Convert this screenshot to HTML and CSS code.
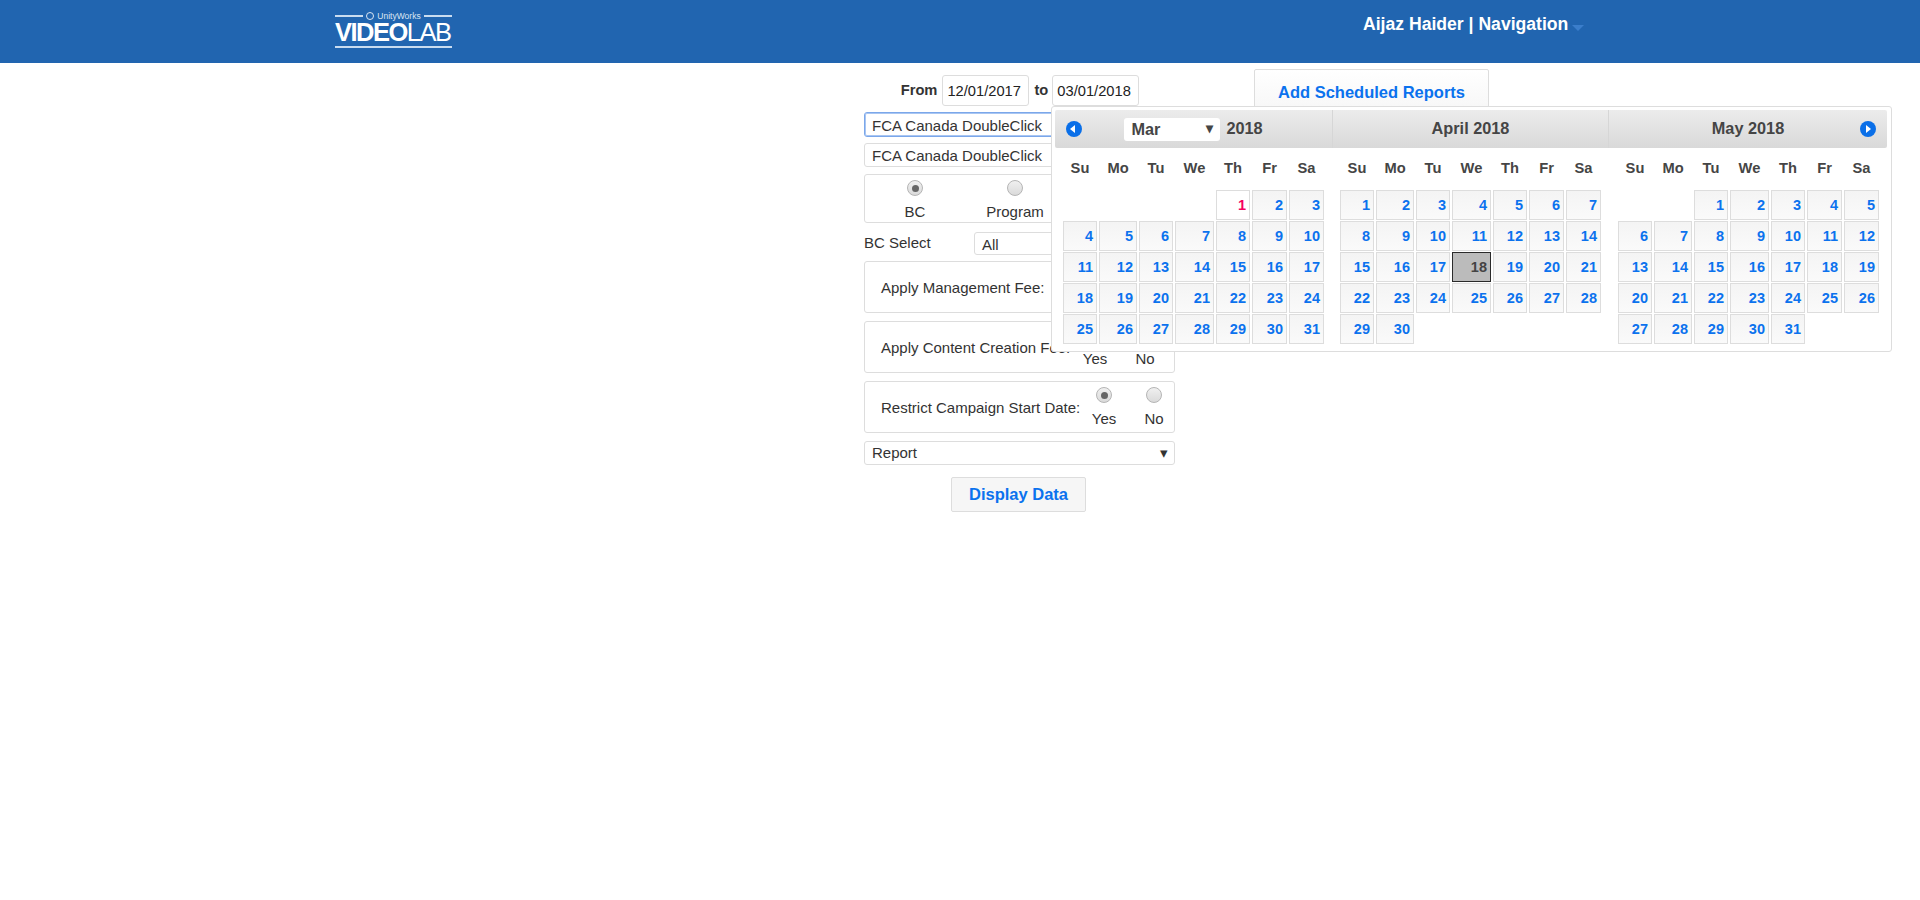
FILE: index.html
```html
<!DOCTYPE html>
<html lang="en">
<head>
<meta charset="utf-8">
<title>Videolab Reports</title>
<link rel="stylesheet" href="styles.css">
</head>
<body>
<div class="topbar">
  <div class="logo">
    <div class="logo-top"><i></i><span class="swirl"></span><span>UnityWorks</span><i></i></div>
    <div class="logo-name"><b>VIDEO</b>LAB</div>
  </div>
  <div class="usernav">Aijaz Haider | Navigation<span class="caret"></span></div>
</div>

<div class="main">
  <div class="form-col">
    <div class="date-row">
      <b>From</b><input class="date" type="text" value="12/01/2017" readonly>
      <b class="to">to</b><input class="date" type="text" value="03/01/2018" readonly>
    </div>
    <div class="pick focus">FCA Canada DoubleClick<span class="arrow">&#9662;</span></div>
    <div class="pick second">FCA Canada DoubleClick<span class="arrow">&#9662;</span></div>
    <div class="panel type-panel">
      <div class="opt"><span class="radio on"></span>BC</div>
      <div class="opt"><span class="radio"></span>Program</div>
      <div class="opt"><span class="radio"></span>Campaign</div>
    </div>
    <div class="bc-row">
      <span class="bc-label">BC Select</span>
      <div class="pick bc-pick">All<span class="arrow">&#9662;</span></div>
    </div>
    <div class="panel fee-panel">
      <span class="fee-label">Apply Management Fee:</span>
      <div class="opt"><span class="radio on"></span>Yes</div>
      <div class="opt"><span class="radio"></span>No</div>
    </div>
    <div class="panel fee-panel">
      <span class="fee-label short">Apply Content Creation Fee:</span>
      <div class="opt"><span class="radio on"></span>Yes</div>
      <div class="opt"><span class="radio"></span>No</div>
    </div>
    <div class="panel fee-panel">
      <span class="fee-label">Restrict Campaign Start Date:</span>
      <div class="opt"><span class="radio on"></span>Yes</div>
      <div class="opt"><span class="radio"></span>No</div>
    </div>
    <div class="pick report">Report<span class="arrow">&#9662;</span></div>
    <button class="btn display-btn" type="button">Display Data</button>
  </div>
  <button class="btn add-btn" type="button">Add Scheduled Reports</button>

  <div class="calendar">
    <div class="cal-head">
      <div class="cal-title first">
        <span class="nav prev"></span>
        <span class="month-pick">Mar<span class="arrow">&#9662;</span></span><span class="year">2018</span>
      </div>
      <div class="cal-title">April 2018</div>
      <div class="cal-title">May 2018<span class="nav next"></span></div>
    </div>
    <div class="months">
      <div class="days">
        <span class="wd">Su</span><span class="wd">Mo</span><span class="wd">Tu</span><span class="wd">We</span><span class="wd">Th</span><span class="wd">Fr</span><span class="wd">Sa</span>
        <a class="start-5 today">1</a><a>2</a><a>3</a>
        <a>4</a><a>5</a><a>6</a><a>7</a><a>8</a><a>9</a><a>10</a>
        <a>11</a><a>12</a><a>13</a><a>14</a><a>15</a><a>16</a><a>17</a>
        <a>18</a><a>19</a><a>20</a><a>21</a><a>22</a><a>23</a><a>24</a>
        <a>25</a><a>26</a><a>27</a><a>28</a><a>29</a><a>30</a><a>31</a>
      </div>
      <div class="days">
        <span class="wd">Su</span><span class="wd">Mo</span><span class="wd">Tu</span><span class="wd">We</span><span class="wd">Th</span><span class="wd">Fr</span><span class="wd">Sa</span>
        <a>1</a><a>2</a><a>3</a><a>4</a><a>5</a><a>6</a><a>7</a>
        <a>8</a><a>9</a><a>10</a><a>11</a><a>12</a><a>13</a><a>14</a>
        <a>15</a><a>16</a><a>17</a><a class="active">18</a><a>19</a><a>20</a><a>21</a>
        <a>22</a><a>23</a><a>24</a><a>25</a><a>26</a><a>27</a><a>28</a>
        <a>29</a><a>30</a>
      </div>
      <div class="days">
        <span class="wd">Su</span><span class="wd">Mo</span><span class="wd">Tu</span><span class="wd">We</span><span class="wd">Th</span><span class="wd">Fr</span><span class="wd">Sa</span>
        <a class="start-3">1</a><a>2</a><a>3</a><a>4</a><a>5</a>
        <a>6</a><a>7</a><a>8</a><a>9</a><a>10</a><a>11</a><a>12</a>
        <a>13</a><a>14</a><a>15</a><a>16</a><a>17</a><a>18</a><a>19</a>
        <a>20</a><a>21</a><a>22</a><a>23</a><a>24</a><a>25</a><a>26</a>
        <a>27</a><a>28</a><a>29</a><a>30</a><a>31</a>
      </div>
    </div>
  </div>
</div>
</body>
</html>
```

FILE: styles.css
```css
*{margin:0; padding:0; box-sizing:border-box;}
body{font:15px/1.2 "Liberation Sans", Arial, sans-serif; color:#333; background:#fff;}

/* top bar */
.topbar{height:63px; background:#2165b0; color:#fff; position:relative; display:flex;}
.logo{width:117px; margin:14px 0 0 335px;}
.logo-top{display:flex; align-items:center; gap:3px; height:4px; font-size:8.5px; color:#dbe6f3;}
.logo-top i{flex:1; height:2px; background:#c9dcf0;}
.swirl{width:8px; height:8px; border:1px solid #dbe6f3; border-radius:50%;}
.logo-name{font-size:25.5px; line-height:29px; letter-spacing:-1.5px; border-bottom:2px solid #c9dcf0; height:30px; white-space:nowrap;}
.logo-name b{font-weight:bold;}
.usernav{margin:15px 0 0 911px; font-size:17.6px; font-weight:bold; line-height:18px; white-space:nowrap;}
.caret{display:inline-block; margin-left:4px; border:6px solid transparent; border-top:6px solid #3b7ecb; border-bottom:0; vertical-align:-1px;}

/* form column */
.main{position:relative; display:flex; align-items:flex-start; padding:12px 0 0 864px;}
.form-col{width:311px; display:flex; flex-direction:column;}
.date-row{display:flex; align-items:center; justify-content:center; height:31px; margin-bottom:6px; padding-right:4px;}
.date-row b{margin-left:5px; margin-right:5px; font-size:14.7px;}
.date-row .to{margin-right:4px;}
.date{width:87px; height:31px; border:1px solid #ddd; border-radius:3px; padding:0 4px; font:14.7px "Liberation Sans", Arial, sans-serif; color:#222; background:#fff; outline:none;}
.pick{position:relative; height:24px; line-height:24px; border:1px solid #ddd; border-radius:3px; padding-left:7px; background:#fff; white-space:nowrap;}
.pick .arrow{position:absolute; right:6px; top:0; color:#333;}
.focus{height:25px; border:1px solid #7ba7ea; box-shadow:inset 0 0 0 1px #a9c6f2; margin-bottom:6px; line-height:25px;}
.second{margin-bottom:7px;}
.panel{border:1px solid #ddd; border-radius:3px; display:flex;}
.type-panel{height:49px; margin-bottom:9px;}
.type-panel .opt{width:100px;}
.type-panel .opt:last-child{width:109px;}
.opt{display:flex; flex-direction:column; align-items:center; flex:none; width:50px; padding-top:5px; line-height:17px;}
.radio{width:16px; height:16px; border-radius:50%; border:1px solid #b5b5b5; background:linear-gradient(#f0f0f0,#dadada); margin-bottom:7px; position:relative;}
.radio.on::after{content:""; position:absolute; left:3.5px; top:3.5px; width:7px; height:7px; border-radius:50%; background:#666;}
.bc-row{display:flex; align-items:center; height:23px; margin-bottom:6px;}
.bc-label{width:110px; margin-top:-2px;}
.bc-pick{flex:1; height:23px; line-height:23px;}
.fee-panel{height:52px; margin-bottom:8px; padding-left:16px; align-items:flex-start;}
.fee-label{flex:none; width:198px; margin-top:17px; white-space:nowrap;}
.fee-label.short{width:189px;}
.report{margin-bottom:12px; line-height:22px;}
.btn{border:1px solid #ddd; border-radius:2px; background:#f6f6f6; color:#0b72ee; font:bold 16.5px "Liberation Sans", Arial, sans-serif;}
.display-btn{width:135px; height:35px; align-self:center; margin-left:-2px;}
.add-btn{width:235px; height:46px; margin:-6px 0 0 79px; background:linear-gradient(#fff,#f6f6f6);}

/* date popup */
.calendar{position:absolute; left:1051px; top:43px; width:841px; height:246px; background:#fff; border:1px solid #ddd; border-radius:3px; padding:3px;}
.cal-head{display:grid; grid-template-columns:277px 276px 279px; width:832px; height:38px; background:linear-gradient(#ececec,#d9d9d9); border-radius:2px; font-size:16.3px; font-weight:bold; color:#454545;}
.cal-title{position:relative; display:flex; align-items:center; justify-content:center; border-left:1px solid #d6d6d6; white-space:nowrap;}
.cal-title.first{border-left:0;}
.nav{position:absolute; top:11px; width:16px; height:16px; border-radius:50%; background:#0a6fe8;}
.nav::after{content:""; position:absolute; top:4px; border:4px solid transparent;}
.prev{left:11px;}
.prev::after{left:4px; border-right:5px solid #fff; border-left:0;}
.next{right:11px;}
.next::after{left:6px; border-left:5px solid #fff; border-right:0;}
.month-pick{position:relative; width:96px; height:23px; line-height:23px; background:#fff; border-radius:3px; padding-left:7px;}
.month-pick .arrow{position:absolute; right:7px; top:-1px; font-size:14px;}
.year{margin-left:6px;}
.months{display:grid; grid-template-columns:277px 278px 277px;}
.days{display:grid; grid-template-columns:34px 38px 34px 39px 34px 35px 35px; grid-template-rows:41px; grid-auto-rows:30px; column-gap:2px; row-gap:1px; margin-left:8px; align-content:start;}
.wd{height:41px; line-height:41px; text-align:center; font-weight:bold; color:#454545; font-size:14.7px;}
.days a{display:block; height:30px; line-height:28px; padding-right:3px; text-align:right; border:1px solid #ddd; background:linear-gradient(#f4f4f4,#fafafa); color:#0b72ee; font-size:14.5px; font-weight:bold;}
.days a.today{background:#fff; color:#f5005f;}
.days a.active{background:#bbb; border:1px solid #2a2a2a; color:#444;}
.start-5{grid-column-start:5;}
.start-3{grid-column-start:3;}
```
